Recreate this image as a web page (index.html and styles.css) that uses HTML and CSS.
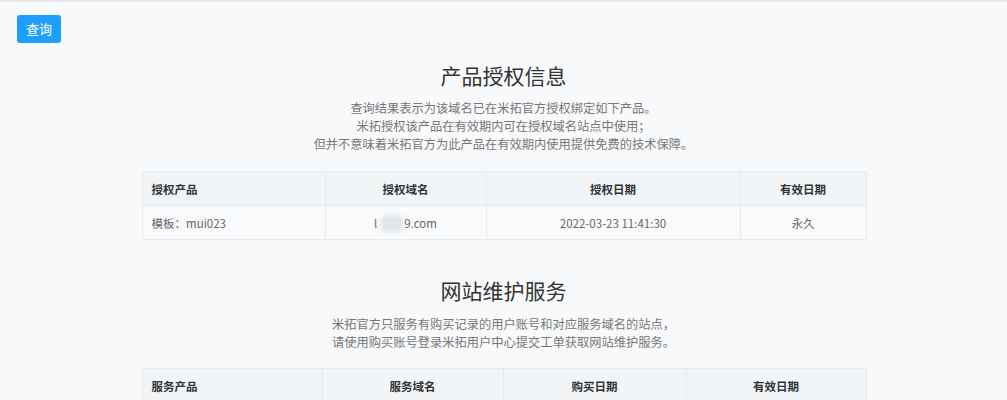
FILE: index.html
```html
<!DOCTYPE html>
<html lang="zh-CN">
<head>
    <meta charset="UTF-8">
    <meta name="viewport" content="width=device-width, initial-scale=1.0">
    <title>产品授权信息</title>
    <link rel="stylesheet" href="styles.css">
</head>
<body>
    <div class="toolbar">
        <button class="btn">查询</button>
    </div>
    <div class="container">
        <h2 class="title">产品授权信息</h2>
        <p class="desc">查询结果表示为该域名已在米拓官方授权绑定如下产品。<br>米拓授权该产品在有效期内可在授权域名站点中使用；<br>但并不意味着米拓官方为此产品在有效期内使用提供免费的技术保障。</p>
        <table class="info-table">
            <colgroup>
                <col style="width: 183px">
                <col style="width: 161px">
                <col style="width: 254px">
                <col style="width: 126px">
            </colgroup>
            <thead>
                <tr>
                    <th class="left">授权产品</th>
                    <th>授权域名</th>
                    <th>授权日期</th>
                    <th>有效日期</th>
                </tr>
            </thead>
            <tbody>
                <tr>
                    <td class="left">模板：mui023</td>
                    <td>l<span class="blur"></span>9.com</td>
                    <td>2022-03-23 11:41:30</td>
                    <td>永久</td>
                </tr>
            </tbody>
        </table>

        <h2 class="title second">网站维护服务</h2>
        <p class="desc">米拓官方只服务有购买记录的用户账号和对应服务域名的站点，<br>请使用购买账号登录米拓用户中心提交工单获取网站维护服务。</p>
        <table class="info-table">
            <colgroup>
                <col style="width: 180px">
                <col style="width: 181px">
                <col style="width: 183px">
                <col style="width: 180px">
            </colgroup>
            <thead>
                <tr>
                    <th class="left">服务产品</th>
                    <th>服务域名</th>
                    <th>购买日期</th>
                    <th>有效日期</th>
                </tr>
            </thead>
        </table>
    </div>
</body>
</html>
```

FILE: styles.css
```css
body {
    margin: 0;
    font-family: "Noto Sans CJK SC", "Noto Sans", sans-serif;
    background-color: #f7f9fb;
    border-top: 2px solid #e6e8eb;
    color: #333;
}
.toolbar {
    padding: 13px 17px 0;
}
.btn {
    height: 28px;
    padding: 0 9px;
    border: none;
    border-radius: 3px;
    background-color: #1e9fff;
    color: #fff;
    font-family: inherit;
    font-size: 13px;
    line-height: 28px;
    cursor: pointer;
    display: block;
}
.container {
    width: 724px;
    margin: 0 auto;
    text-align: center;
}
.title {
    margin: 17px 0 0;
    font-size: 21px;
    font-weight: normal;
    line-height: 30px;
    color: #333;
}
.title.second {
    margin-top: 35px;
}
.desc {
    margin: 9px 0 18px;
    font-size: 12.25px;
    line-height: 18px;
    color: #777;
}
.second + .desc {
    margin: 10px 0 17px;
}
.info-table {
    width: 724px;
    table-layout: fixed;
    border-collapse: collapse;
    font-size: 11.5px;
}
.info-table th, .info-table td {
    height: 34px;
    padding: 0 9px;
    border: 1px solid #e6e9ed;
    line-height: 20px;
    text-align: center;
    box-sizing: border-box;
}
.info-table th {
    background-color: #f2f5f8;
    color: #333;
    font-weight: bold;
}
.info-table td {
    background-color: #f9fafc;
    color: #666;
}
.info-table .left {
    text-align: left;
}
.blur {
    display: inline-block;
    width: 22px;
    height: 17px;
    margin: 0 1px 0 4px;
    vertical-align: -4px;
    background-color: #e1e4e8;
    border-radius: 6px;
    filter: blur(2px);
}
```
